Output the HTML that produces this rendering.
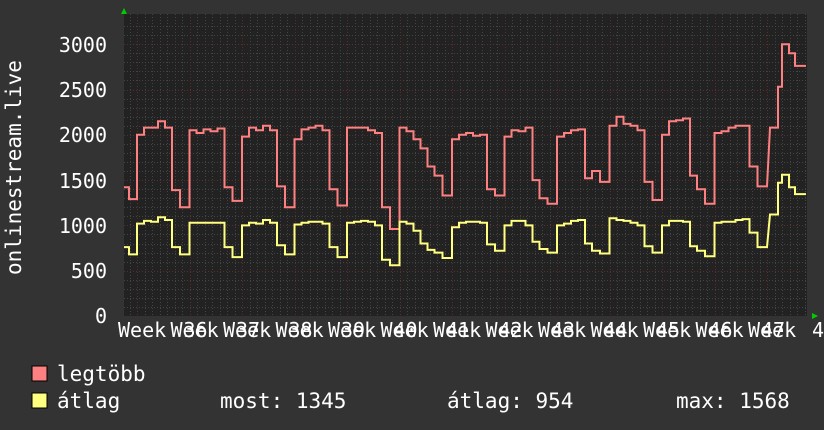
<!DOCTYPE html>
<html><head><meta charset="utf-8"><style>
html,body{margin:0;padding:0;background:#333;width:824px;height:430px;overflow:hidden}
svg text{font-family:"DejaVu Sans Mono","Liberation Mono",monospace;fill:#fff}
</style></head><body>
<svg id="s" width="824" height="430" xmlns="http://www.w3.org/2000/svg">
<rect x="0" y="0" width="824" height="430" fill="#333"/>
<rect x="124" y="14" width="683" height="302" fill="#222"/>
<g id="grid"></g>
<polygon points="121,14 127,14 124,8" fill="#0c0"/>
<polygon points="812,313 812,319 818,316" fill="#0c0"/>
<g font-size="20" text-anchor="end">
<text x="107" y="52">3000</text><text x="107" y="97">2500</text><text x="107" y="142">2000</text>
<text x="107" y="188">1500</text><text x="107" y="233">1000</text><text x="107" y="278">500</text><text x="107" y="323">0</text>
</g>
<text transform="translate(21,275) rotate(-90)" font-size="21">onlinestream.live</text>
<g id="wk" font-size="20"></g>
<polyline id="red" fill="none" stroke="#ff8080" stroke-width="2"/>
<polyline id="yel" fill="none" stroke="#ffff80" stroke-width="2"/>
<rect x="32" y="366" width="15" height="15" fill="#ff8080" stroke="#000"/>
<rect x="32" y="393" width="15" height="15" fill="#ffff80" stroke="#000"/>
<g font-size="21">
<text x="57" y="381">legtöbb</text>
<text x="57" y="408">átlag</text>
<text x="220" y="408">most: 1345</text>
<text x="447" y="408">átlag: 954</text>
<text x="676" y="408">max: 1568</text>
</g>
</svg>
<script>
var ns="http://www.w3.org/2000/svg",g=document.getElementById('grid');
function ln(x1,y1,x2,y2,c,d){var l=document.createElementNS(ns,'line');l.setAttribute('x1',x1);l.setAttribute('y1',y1);l.setAttribute('x2',x2);l.setAttribute('y2',y2);l.setAttribute('stroke',c);l.setAttribute('stroke-width',1);if(d)l.setAttribute('stroke-dasharray',d);g.appendChild(l);}
function Y(v){return 316-v*0.0906;}
for(var v=100;v<=3200;v+=100){var y=Math.round(Y(v))+.5;if(y<14)break;ln(124,y,807,y,v%500?'#444':'#5a2e2e','1,2');}
for(var x=129.5;x<807;x+=7.5){var mj=Math.abs(((x-136.7)%52.5))<1||Math.abs(((x-136.7)%52.5)-52.5)<1;ln(Math.round(x)+.5,14,Math.round(x)+.5,316,mj?'#5a2e2e':'#444','1,2');}
var wk=document.getElementById('wk');
for(var k=0;k<13;k++){var t=document.createElementNS(ns,'text');t.setAttribute('x',118+52.5*k);t.setAttribute('y',337);t.textContent='Week';wk.appendChild(t);
if(k<12){var t2=document.createElementNS(ns,'text');t2.setAttribute('x',183.5+52.5*k);t2.setAttribute('y',337);t2.textContent=36+k;wk.appendChild(t2);}}
var t3=document.createElementNS(ns,'text');t3.setAttribute('x',812);t3.setAttribute('y',337);t3.textContent='4';wk.appendChild(t3);
var R=[[2000,2080,2080,2150,2080],[2050,2020,2060,2040,2070],[1980,2080,2050,2100,2050],[1950,2060,2080,2100,2050],[2080,2080,2080,2050,2020],[2080,2040,1950,1850,1650],[1950,2000,2020,1990,2000],[1980,2050,2040,2080,1500],[1980,2020,2050,2060,1520],[2100,2200,2120,2100,2050],[2000,2150,2160,2180,1550],[2020,2040,2080,2100,2100],[2230,2280,2300,2250,2200]];
var RW=[[1420,1290],[1390,1200],[1420,1270],[1430,1200],[1400,1220],[1200,960],[1550,1330],[1400,1330],[1300,1240],[1600,1480],[1480,1280],[1400,1240],[1650,1430]];
var Yw=[[1020,1050,1040,1090,1060],[1030,1030,1030,1030,1030],[1000,1030,1020,1060,1030],[1010,1030,1040,1040,1020],[1030,1040,1050,1040,1000],[1040,1020,940,800,730],[980,1030,1040,1040,1030],[1000,1050,1050,1000,820],[1000,1020,1050,1060,800],[1080,1060,1050,1030,1000],[1000,1050,1050,1040,770],[1030,1040,1040,1060,1070],[1120,1150,1170,1160,1160]];
var YW=[[760,680],[760,680],[760,650],[780,680],[760,650],[620,560],[700,640],[790,720],[740,700],[720,690],[770,700],[720,660],[920,760]];
function build(W,E,last){var p=[[124,Y(E[0][0])],[129,Y(E[0][0])],[129,Y(E[0][1])]];
for(var k=0;k<13;k++){var xs=137+52.5*k;p.push([xs,Y(E[k][1])]);for(var i=0;i<5;i++){p.push([xs+7*i,Y(W[k][i])]);p.push([xs+7*(i+1),Y(W[k][i])]);}
var xd=xs+35;if(k<12){p.push([xd,Y(E[k+1][0])]);p.push([xd+8,Y(E[k+1][0])]);p.push([xd+8,Y(E[k+1][1])]);}
else{p=p.slice(0,p.length-10);var L=last;p.push([770,Y(L[0])]);p.push([778,Y(L[0])]);p.push([778,Y(L[1])]);p.push([782,Y(L[1])]);p.push([782,Y(L[2])]);p.push([789,Y(L[2])]);p.push([789,Y(L[3])]);p.push([795,Y(L[3])]);p.push([795,Y(L[4])]);p.push([806,Y(L[4])]);}}
return p.map(function(a){return a[0].toFixed(1)+','+a[1].toFixed(1)}).join(' ');}
document.getElementById('red').setAttribute('points',build(R,RW,[2080,2530,3000,2900,2760]));
document.getElementById('yel').setAttribute('points',build(Yw,YW,[1120,1470,1560,1420,1345]));
</script>
</body></html>
